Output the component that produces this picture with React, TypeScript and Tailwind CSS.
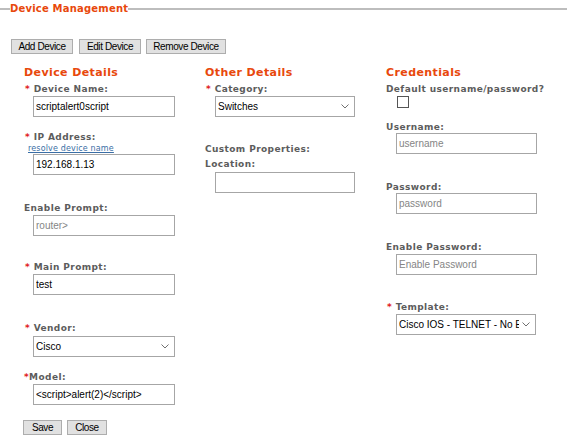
import React from "react";

const labelCls =
  "h-[12px] leading-[12px] text-[9px] font-bold tracking-[0.4px] text-[#5c5c5c] whitespace-nowrap font-['DejaVu_Sans',Verdana,sans-serif]";
const headCls =
  "h-[14px] leading-[14px] text-[11px] font-bold tracking-[0.4px] text-[#e8480c] whitespace-nowrap font-['DejaVu_Sans',Verdana,sans-serif]";
const inputCls =
  "block h-[21px] border border-[#a6a6a6] bg-white px-[2px] text-[10px] text-black font-['Liberation_Sans',Arial,sans-serif] outline-none placeholder:text-[#858585]";
const btnCls =
  "h-[15px] border border-[#adadad] bg-[#e1e1e1] text-[10px] leading-[13px] tracking-[-0.4px] text-black font-['Liberation_Sans',Arial,sans-serif]";

function Label({ text, req, tight, className = "" }: { text: string; req?: boolean; tight?: boolean; className?: string }) {
  return (
    <div className={`${labelCls} ${className}`}>
      {req && <span className="text-[#e0201a]">*</span>}
      {req && !tight && " "}
      {text}
    </div>
  );
}

function Select({ value, width, className = "" }: { value: string; width: string; className?: string }) {
  return (
    <div className={`relative ${width} ${className}`}>
      <select
        defaultValue={value}
        className={`${inputCls} w-full appearance-none pr-[16px] overflow-hidden`}
      >
        <option>{value}</option>
      </select>
      <svg
        className="pointer-events-none absolute right-[6px] top-[8px]"
        width="8"
        height="5"
        viewBox="0 0 8 5"
      >
        <path d="M0.5 0.5 L4 4 L7.5 0.5" fill="none" stroke="#707070" strokeWidth="1" />
      </svg>
    </div>
  );
}

export default function App() {
  return (
    <div className="relative h-[446px] w-[567px] overflow-hidden bg-white">
      {/* fieldset legend */}
      <div className="flex h-[18px] items-center">
        <div className="h-[2px] w-[10px] bg-[#bdbdbd]" />
        <span className="text-[10px] font-bold leading-[14px] tracking-[0.2px] text-[#e8480c] font-['DejaVu_Sans',Verdana,sans-serif]">
          Device Management
        </span>
        <div className="h-[2px] flex-1 bg-[#bdbdbd]" />
      </div>

      {/* toolbar */}
      <div className="mt-[21px] flex gap-[5px] pl-[11px]">
        <button className={`${btnCls} w-[62px]`}>Add Device</button>
        <button className={`${btnCls} ml-px w-[62px]`}>Edit Device</button>
        <button className={`${btnCls} w-[80px]`}>Remove Device</button>
      </div>

      <div className="mt-[12px] flex pl-[24px]">
        {/* Device Details */}
        <div className="flex w-[181px] flex-col">
          <div className={headCls}>Device Details</div>
          <Label text="Device Name:" req className="mt-[3px] pl-px" />
          <input
            className={`${inputCls} ml-[9px] mt-px w-[142px] bg-[#ddd8d3] border-[#9e9893]`}
            defaultValue="scriptalert0script"
          />
          <Label text="IP Address:" req className="mt-[14px] pl-px" />
          <a
            href="#"
            className="ml-[4px] mt-px h-[10px] text-[8px] leading-[10px] tracking-[0.15px] text-[#3b6ea5] underline font-['DejaVu_Sans',Verdana,sans-serif]"
          >
            resolve device name
          </a>
          <input className={`${inputCls} ml-[9px] w-[142px]`} defaultValue="192.168.1.13" />
          <Label text="Enable Prompt:" className="mt-[27px]" />
          <input className={`${inputCls} ml-[9px] mt-px w-[142px]`} placeholder="router>" />
          <Label text="Main Prompt:" req className="mt-[25px] pl-px" />
          <input className={`${inputCls} ml-[9px] mt-px w-[142px]`} defaultValue="test" />
          <Label text="Vendor:" req className="mt-[27px] pl-px" />
          <Select value="Cisco" width="w-[142px]" className="ml-[9px] mt-[2px]" />
          <Label text="Model:" req tight className="mt-[14px]" />
          <input
            className={`${inputCls} ml-[9px] mt-px w-[142px]`}
            defaultValue="<script>alert(2)</script>"
          />
          <div className="-ml-px mt-[15px] flex gap-[5px]">
            <button className={`${btnCls} w-[39px]`}>Save</button>
            <button className={`${btnCls} w-[40px]`}>Close</button>
          </div>
        </div>

        {/* Other Details */}
        <div className="flex w-[181px] flex-col">
          <div className={headCls}>Other Details</div>
          <Label text="Category:" req className="mt-[3px] pl-px" />
          <Select value="Switches" width="w-[140px]" className="ml-[10px] mt-px" />
          <Label text="Custom Properties:" className="mt-[26px]" />
          <Label text="Location:" className="mt-[3px]" />
          <input className={`${inputCls} ml-[10px] mt-[2px] w-[140px]`} />
        </div>

        {/* Credentials */}
        <div className="flex flex-1 flex-col">
          <div className={headCls}>Credentials</div>
          <Label text="Default username/password?" className="mt-[3px]" />
          <input
            type="checkbox"
            className="ml-[11px] mt-px h-[12px] w-[12px] appearance-none border border-[#555] bg-white"
          />
          <Label text="Username:" className="mt-[13px]" />
          <input className={`${inputCls} ml-[10px] w-[141px]`} placeholder="username" />
          <Label text="Password:" className="mt-[27px]" />
          <input className={`${inputCls} ml-[10px] w-[141px]`} placeholder="password" />
          <Label text="Enable Password:" className="mt-[27px]" />
          <input className={`${inputCls} ml-[10px] mt-px w-[141px]`} placeholder="Enable Password" />
          <Label text="Template:" req className="mt-[26px] pl-px" />
          <Select value="Cisco IOS - TELNET - No Enable" width="w-[140px]" className="ml-[10px] mt-px" />
        </div>
      </div>
    </div>
  );
}
